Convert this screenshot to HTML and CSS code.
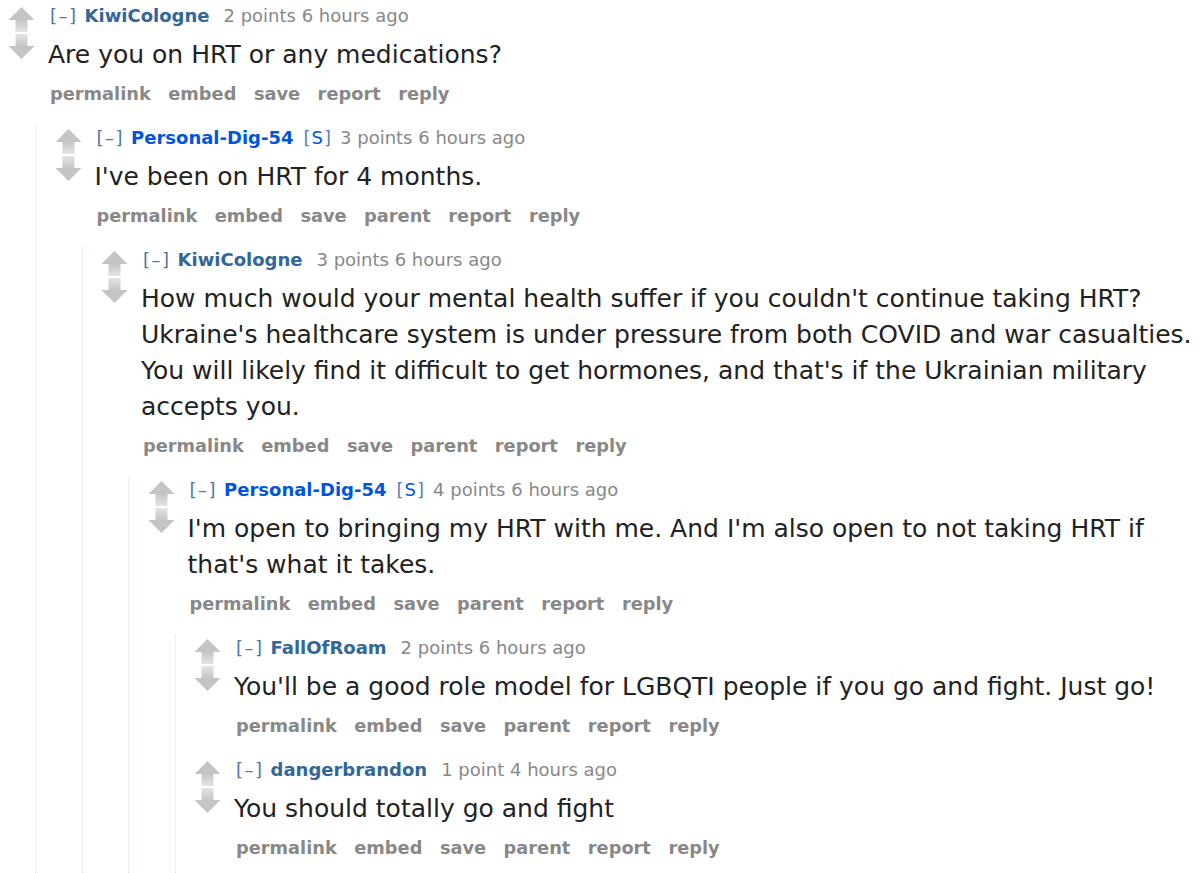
FILE: index.html
```html
<!DOCTYPE html>
<html>

<head>
    <title>Comments</title>
    <link rel="stylesheet" href="styles.css">
</head>

<body>
    <svg class="sprites" width="0" height="0">
        <defs>
            <linearGradient id="fade-up" x1="0" y1="0" x2="0" y2="1">
                <stop offset="0" stop-color="#c4c4c4" />
                <stop offset="1" stop-color="#e4e4e4" />
            </linearGradient>
            <linearGradient id="fade-down" x1="0" y1="0" x2="0" y2="1">
                <stop offset="0" stop-color="#e4e4e4" />
                <stop offset="1" stop-color="#c4c4c4" />
            </linearGradient>
            <symbol id="arrow-up" viewBox="0 0 27 25">
                <polygon points="0.5,13 13.5,0 26.5,13" fill="#c4c4c4" />
                <rect x="7.5" y="12.5" width="12" height="12.5" fill="url(#fade-up)" />
            </symbol>
            <symbol id="arrow-down" viewBox="0 0 27 25">
                <rect x="7.5" y="0" width="12" height="12.5" fill="url(#fade-down)" />
                <polygon points="0.5,12 26.5,12 13.5,25" fill="#c4c4c4" />
            </symbol>
        </defs>
    </svg>

    <div class="comment-area">
        <div class="comment">
            <div class="thing">
                <div class="midcol">
                    <svg class="arrow"><use href="#arrow-up" /></svg>
                    <svg class="arrow"><use href="#arrow-down" /></svg>
                </div>
                <div class="entry">
                    <p class="tagline"><span class="expand">[–]</span><span class="author">KiwiCologne</span><span class="score">2 points</span> <span class="time">6 hours ago</span></p>
                    <div class="md">
                        <p>Are you on HRT or any medications?</p>
                    </div>
                    <ul class="buttons">
                        <li>permalink</li>
                        <li>embed</li>
                        <li>save</li>
                        <li>report</li>
                        <li>reply</li>
                    </ul>
                </div>
            </div>

            <div class="child">
                <div class="comment">
                    <div class="thing">
                        <div class="midcol">
                            <svg class="arrow"><use href="#arrow-up" /></svg>
                            <svg class="arrow"><use href="#arrow-down" /></svg>
                        </div>
                        <div class="entry">
                            <p class="tagline"><span class="expand">[–]</span><span class="author submitter">Personal-Dig-54</span><span class="userattrs">[<b>S</b>]</span><span class="score">3 points</span> <span class="time">6 hours ago</span></p>
                            <div class="md">
                                <p>I've been on HRT for 4 months.</p>
                            </div>
                            <ul class="buttons">
                                <li>permalink</li>
                                <li>embed</li>
                                <li>save</li>
                                <li>parent</li>
                                <li>report</li>
                                <li>reply</li>
                            </ul>
                        </div>
                    </div>

                    <div class="child">
                        <div class="comment">
                            <div class="thing">
                                <div class="midcol">
                                    <svg class="arrow"><use href="#arrow-up" /></svg>
                                    <svg class="arrow"><use href="#arrow-down" /></svg>
                                </div>
                                <div class="entry">
                                    <p class="tagline"><span class="expand">[–]</span><span class="author">KiwiCologne</span><span class="score">3 points</span> <span class="time">6 hours ago</span></p>
                                    <div class="md">
                                        <p>How much would your mental health suffer if you couldn't continue taking HRT? Ukraine's healthcare system is under pressure from both COVID and war casualties. You will likely find it difficult to get hormones, and that's if the Ukrainian military accepts you.</p>
                                    </div>
                                    <ul class="buttons">
                                        <li>permalink</li>
                                        <li>embed</li>
                                        <li>save</li>
                                        <li>parent</li>
                                        <li>report</li>
                                        <li>reply</li>
                                    </ul>
                                </div>
                            </div>

                            <div class="child">
                                <div class="comment">
                                    <div class="thing">
                                        <div class="midcol">
                                            <svg class="arrow"><use href="#arrow-up" /></svg>
                                            <svg class="arrow"><use href="#arrow-down" /></svg>
                                        </div>
                                        <div class="entry">
                                            <p class="tagline"><span class="expand">[–]</span><span class="author submitter">Personal-Dig-54</span><span class="userattrs">[<b>S</b>]</span><span class="score">4 points</span> <span class="time">6 hours ago</span></p>
                                            <div class="md">
                                                <p>I'm open to bringing my HRT with me. And I'm also open to not taking HRT if that's what it takes.</p>
                                            </div>
                                            <ul class="buttons">
                                                <li>permalink</li>
                                                <li>embed</li>
                                                <li>save</li>
                                                <li>parent</li>
                                                <li>report</li>
                                                <li>reply</li>
                                            </ul>
                                        </div>
                                    </div>

                                    <div class="child child-last">
                                        <div class="comment">
                                            <div class="thing">
                                                <div class="midcol">
                                                    <svg class="arrow"><use href="#arrow-up" /></svg>
                                                    <svg class="arrow"><use href="#arrow-down" /></svg>
                                                </div>
                                                <div class="entry">
                                                    <p class="tagline"><span class="expand">[–]</span><span class="author">FallOfRoam</span><span class="score">2 points</span> <span class="time">6 hours ago</span></p>
                                                    <div class="md">
                                                        <p>You'll be a good role model for LGBQTI people if you go and fight. Just go!</p>
                                                    </div>
                                                    <ul class="buttons">
                                                        <li>permalink</li>
                                                        <li>embed</li>
                                                        <li>save</li>
                                                        <li>parent</li>
                                                        <li>report</li>
                                                        <li>reply</li>
                                                    </ul>
                                                </div>
                                            </div>
                                        </div>

                                        <div class="comment">
                                            <div class="thing">
                                                <div class="midcol">
                                                    <svg class="arrow"><use href="#arrow-up" /></svg>
                                                    <svg class="arrow"><use href="#arrow-down" /></svg>
                                                </div>
                                                <div class="entry">
                                                    <p class="tagline"><span class="expand">[–]</span><span class="author">dangerbrandon</span><span class="score">1 point</span> <span class="time">4 hours ago</span></p>
                                                    <div class="md">
                                                        <p>You should totally go and fight</p>
                                                    </div>
                                                    <ul class="buttons">
                                                        <li>permalink</li>
                                                        <li>embed</li>
                                                        <li>save</li>
                                                        <li>parent</li>
                                                        <li>report</li>
                                                        <li>reply</li>
                                                    </ul>
                                                </div>
                                            </div>
                                        </div>
                                    </div>
                                </div>
                            </div>
                        </div>
                    </div>
                </div>
            </div>
        </div>
    </div>
</body>

</html>
```

FILE: styles.css
```css
body {
    margin: 0;
    background-color: #fff;
    font-family: "DejaVu Sans", Verdana, sans-serif;
    color: #222;
    overflow: hidden;
}

.sprites {
    display: block;
    height: 0;
}

.comment-area {
    padding: 3px 0 0 8px;
}

.comment {
    padding-top: 2px;
}

.comment + .comment {
    margin-top: 20px;
}

.thing {
    display: flex;
}

.midcol {
    width: 27px;
    margin-right: 13px;
    flex-shrink: 0;
}

.arrow {
    display: block;
    width: 27px;
    height: 25px;
    margin-top: 2px;
}

.entry {
    flex: 1;
    min-width: 0;
}

.tagline {
    margin: 0;
    font-size: 18px;
    line-height: 22px;
    color: #888;
    padding-left: 2px;
}

.expand {
    color: #4f77a8;
    letter-spacing: 1.5px;
    margin-right: 7px;
}

.author {
    color: #369;
    font-weight: bold;
    margin-right: 14px;
}

.author.submitter {
    color: #0055df;
}

.userattrs {
    color: #5b7fc0;
    letter-spacing: 1px;
    margin-left: -4px;
    margin-right: 8px;
}

.userattrs b {
    font-weight: normal;
    color: #0055df;
}

.md {
    margin-top: 10px;
    font-size: 25px;
    line-height: 36px;
}

.md p {
    margin: 0;
}

.buttons {
    list-style: none;
    margin: 10px 0 0 0;
    padding: 0 0 0 2px;
    display: flex;
    gap: 17.5px;
    font-size: 17.8px;
    line-height: 22px;
    font-weight: bold;
    color: #888;
}

/* nested replies */
.child {
    margin-top: 20px;
    margin-left: 27px;
    padding-left: 18.5px;
    border-left: 1px dotted #ddf;
}

.child-last {
    padding-bottom: 40px;
}
```
